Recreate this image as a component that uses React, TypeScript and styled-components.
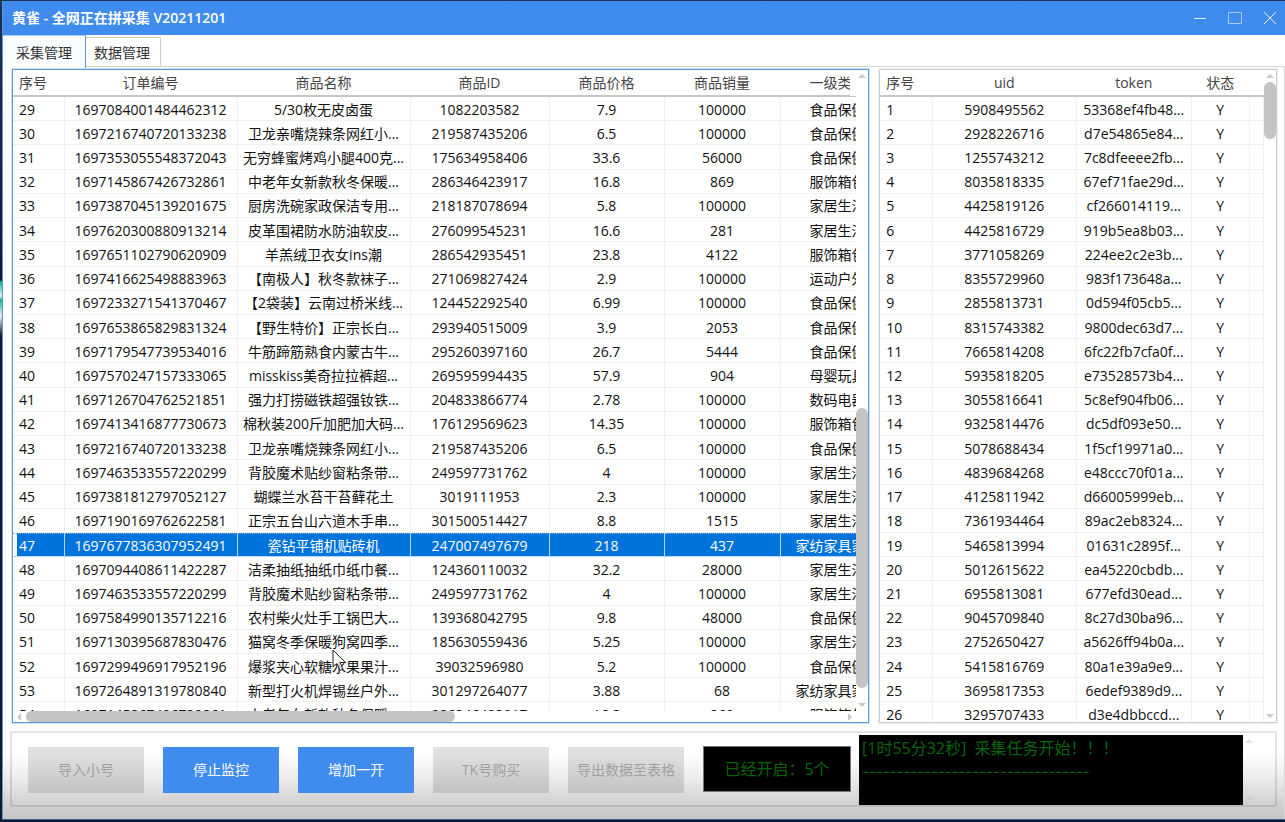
import React from 'react';
import styled, { createGlobalStyle, css } from 'styled-components';

const BLUE = '#408cee';

const GlobalStyle = createGlobalStyle`
  *, *::before, *::after { box-sizing: border-box; }
  body { margin: 0; background: #101a2c; }
  body, button {
    font-family: 'Open Sans', 'Noto Sans CJK SC', sans-serif;
    font-size: 14px;
    line-height: 20px;
  }
  button { padding: 0; border: 0; border-radius: 0; }
`;

const Desktop = styled.div`
  height: 100vh;
  padding: 1px 0 2px 2px;
  background: linear-gradient(#1d3358 0, #101a2c 280px, #19b38c 282px, #dff3f4 296px, #19b38c 300px, #e8eef5 316px, #101a2c 336px);
`;

const Window = styled.div`
  display: flex;
  flex-direction: column;
  height: 100%;
  overflow: hidden;
  border-left: 1px solid #5b94da;
  border-bottom: 1px solid #3c6296;
  background: linear-gradient(to top, #c6c6c6 0, #d2d2d2 16px, #eeeeee 44px, #ffffff 66px);
`;

const TitleBar = styled.header`
  display: flex;
  flex: none;
  align-items: center;
  justify-content: space-between;
  height: 34px;
  padding-left: 9px;
  background: ${BLUE};
  color: #fff;
`;

const Title = styled.h1`
  margin: 0;
  font-size: 14px;
  font-weight: 600;
`;

const WindowControls = styled.div`
  display: flex;
  gap: 5px;
`;

const ControlButton = styled.button<{ $faint?: boolean }>`
  display: grid;
  place-items: center;
  width: 30px;
  height: 34px;
  background: transparent;
  color: #fff;
  opacity: ${({ $faint }) => ($faint ? 0.55 : 0.9)};
`;

const TabStrip = styled.div`
  display: flex;
  flex: none;
  align-items: flex-end;
  height: 32px;
  border-bottom: 1px solid #d4d4d4;
`;

const Tab = styled.button<{ $active?: boolean }>`
  height: 29px;
  padding: 2px 10px 0 8px;
  border: 1px solid #cfcfcf;
  border-left: 0;
  border-bottom: 0;
  background: #fff;
  color: #333;
  ${({ $active }) =>
    $active &&
    css`
      height: 33px;
      margin-bottom: -2px;
      padding: 2px 13px 0;
      border: 0;
      border-top: 1px solid #a9cdf5;
      border-right: 1px solid #5b9ae4;
      background: #fafdff;
    `}
`;

const Page = styled.main`
  display: flex;
  flex: 1;
  flex-direction: column;
  gap: 8px;
  min-height: 0;
  padding: 2px 7px 12px 7px;
  border-right: 1px solid #d9d9d9;
`;

const Lists = styled.div`
  display: flex;
  flex: 1;
  gap: 10px;
  min-height: 0;
  margin-left: 2px;
`;

const ListBox = styled.section<{ $grow: number; $focused?: boolean }>`
  position: relative;
  display: grid;
  grid-template-columns: minmax(0, 1fr) 12px;
  grid-template-rows: minmax(0, 1fr) auto;
  flex: ${({ $grow }) => $grow} 1 0;
  min-width: 0;
  border: 1px solid ${({ $focused }) => ($focused ? '#5b9ad8' : '#cccccc')};
  box-shadow: 0 0 0 1px ${({ $focused }) => ($focused ? '#cfe4fb' : '#f0f0f0')};
  background: #fff;
`;

const Viewport = styled.div`
  position: relative;
  overflow: hidden;
`;

const DataTable = styled.table<{ $width: string }>`
  width: ${({ $width }) => $width};
  height: 657px;
  table-layout: fixed;
  border-collapse: separate;
  border-spacing: 0;
  color: #111;
`;

const HeadCell = styled.th`
  height: 27px;
  padding: 0 2px 0 0;
  border-bottom: 2px solid #c6c6c6;
  color: #444;
  font-weight: 400;
  text-align: center;
  white-space: nowrap;

  &:first-child {
    padding-left: 6px;
    text-align: left;
  }
`;

const Cell = styled.td`
  padding: 2px 1px 0 0;
  border-right: 1px solid #f0f0f0;
  border-bottom: 1px solid #f0f0f0;
  text-align: center;
  white-space: nowrap;

  &:first-child {
    padding-left: 6px;
    text-align: left;
  }
`;

const Row = styled.tr<{ $selected?: boolean }>`
  ${({ $selected }) =>
    $selected &&
    css`
      color: #fff;
      ${Cell} {
        padding-top: 1px;
        border-top: 1px dotted #8fb4d8;
        border-right-color: #b5d6f5;
        border-bottom-color: #b5d6f5;
        background: #0074dc;
      }
      ${Cell}:first-child {
        background: linear-gradient(to right, #fff 4px, #0074dc 4px);
      }
    `}
`;

const HeaderEnd = styled.div`
  position: absolute;
  top: 0;
  right: 0;
  width: 6px;
  height: 26px;
  background: #fff;
`;

const Bar = styled.div<{ $horizontal?: boolean }>`
  display: flex;
  flex-direction: ${({ $horizontal }) => ($horizontal ? 'row' : 'column')};
  ${({ $horizontal }) => ($horizontal ? 'height: 11px;' : 'width: 12px;')}
`;

const Space = styled.div<{ $size: number }>`
  flex: ${({ $size }) => $size} 1 0;
`;

const Thumb = styled(Space)`
  border-radius: 6px;
  background: #c4c4c4;
`;

const ArrowSlot = styled.div`
  display: grid;
  flex: 0 0 12px;
  place-items: center;
  color: #c8c8c8;
`;

const arrowPaths = {
  up: 'M0 6 4 2 8 6Z',
  down: 'M0 2 8 2 4 6Z',
  left: 'M6 0 6 8 2 4Z',
  right: 'M2 0 6 4 2 8Z',
};

function Arrow({ to }: { to: keyof typeof arrowPaths }) {
  return (
    <ArrowSlot>
      <svg width="8" height="8" viewBox="0 0 8 8" fill="currentColor" aria-hidden="true">
        <path d={arrowPaths[to]} />
      </svg>
    </ArrowSlot>
  );
}

function ScrollBar({ before, thumb, after, horizontal }: { before: number; thumb: number; after: number; horizontal?: boolean }) {
  return (
    <Bar $horizontal={horizontal} aria-hidden="true">
      <Arrow to={horizontal ? 'left' : 'up'} />
      <Space $size={before} />
      {thumb > 0 && <Thumb $size={thumb} />}
      <Space $size={after} />
      <Arrow to={horizontal ? 'right' : 'down'} />
    </Bar>
  );
}

const Pointer = styled.svg`
  position: absolute;
  left: 319px;
  top: 579px;
`;

const Panel = styled.footer`
  display: flex;
  flex: none;
  align-items: center;
  gap: 19px;
  height: 76px;
  padding: 2px 20px 0 16px;
  border: 2px solid rgba(0, 0, 0, 0.11);
  border-radius: 2px;
`;

const ActionButton = styled.button`
  flex: none;
  width: 116px;
  height: 46px;
  background: ${BLUE};
  color: #fff;

  &:disabled {
    background: rgba(0, 0, 0, 0.12);
    color: #a0a0a0;
  }
`;

const Console = styled.div`
  display: flex;
  flex: 1;
  align-items: center;
  align-self: stretch;
  gap: 8px;
  min-width: 0;
`;

const Counter = styled.output`
  display: grid;
  flex: none;
  place-items: center;
  width: 148px;
  height: 46px;
  margin-bottom: 2px;
  border: 1px solid #777;
  background: #000;
  color: #046404;
  font-size: 16px;
`;

const Log = styled.div`
  flex: 1;
  align-self: stretch;
  min-width: 0;
  overflow: hidden;
  padding: 1px 3px;
  background: #000;
  color: #0a640d;
  font-size: 16px;
  line-height: 24px;
  white-space: pre;
`;

const Rule = styled.div`
  font-family: Inter, sans-serif;
  font-size: 15px;
`;

const LogScroll = styled.div`
  display: flex;
  align-self: stretch;
  margin-left: -8px;
  opacity: 0.5;
`;

const orderColumns: [string, number][] = [
  ['序号', 52],
  ['订单编号', 173],
  ['商品名称', 173],
  ['商品ID', 139],
  ['商品价格', 115],
  ['商品销量', 116],
  ['一级类目', 115],
];

const orders: string[][] = [
  ['29', '1697084001484462312', '5/30枚无皮卤蛋', '1082203582', '7.9', '100000', '食品保健'],
  ['30', '1697216740720133238', '卫龙亲嘴烧辣条网红小...', '219587435206', '6.5', '100000', '食品保健'],
  ['31', '1697353055548372043', '无穷蜂蜜烤鸡小腿400克...', '175634958406', '33.6', '56000', '食品保健'],
  ['32', '1697145867426732861', '中老年女新款秋冬保暖...', '286346423917', '16.8', '869', '服饰箱包'],
  ['33', '1697387045139201675', '厨房洗碗家政保洁专用...', '218187078694', '5.8', '100000', '家居生活'],
  ['34', '1697620300880913214', '皮革围裙防水防油软皮...', '276099545231', '16.6', '281', '家居生活'],
  ['35', '1697651102790620909', '羊羔绒卫衣女ins潮', '286542935451', '23.8', '4122', '服饰箱包'],
  ['36', '1697416625498883963', '【南极人】秋冬款袜子...', '271069827424', '2.9', '100000', '运动户外'],
  ['37', '1697233271541370467', '【2袋装】云南过桥米线...', '124452292540', '6.99', '100000', '食品保健'],
  ['38', '1697653865829831324', '【野生特价】正宗长白...', '293940515009', '3.9', '2053', '食品保健'],
  ['39', '1697179547739534016', '牛筋蹄筋熟食内蒙古牛...', '295260397160', '26.7', '5444', '食品保健'],
  ['40', '1697570247157333065', 'misskiss美奇拉拉裤超...', '269595994435', '57.9', '904', '母婴玩具'],
  ['41', '1697126704762521851', '强力打捞磁铁超强钕铁...', '204833866774', '2.78', '100000', '数码电器'],
  ['42', '1697413416877730673', '棉秋装200斤加肥加大码...', '176129569623', '14.35', '100000', '服饰箱包'],
  ['43', '1697216740720133238', '卫龙亲嘴烧辣条网红小...', '219587435206', '6.5', '100000', '食品保健'],
  ['44', '1697463533557220299', '背胶魔术贴纱窗粘条带...', '249597731762', '4', '100000', '家居生活'],
  ['45', '1697381812797052127', '蝴蝶兰水苔干苔藓花土', '3019111953', '2.3', '100000', '家居生活'],
  ['46', '1697190169762622581', '正宗五台山六道木手串...', '301500514427', '8.8', '1515', '家居生活'],
  ['47', '1697677836307952491', '瓷钻平铺机贴砖机', '247007497679', '218', '437', '家纺家具家装'],
  ['48', '1697094408611422287', '洁柔抽纸抽纸巾纸巾餐...', '124360110032', '32.2', '28000', '家居生活'],
  ['49', '1697463533557220299', '背胶魔术贴纱窗粘条带...', '249597731762', '4', '100000', '家居生活'],
  ['50', '1697584990135712216', '农村柴火灶手工锅巴大...', '139368042795', '9.8', '48000', '食品保健'],
  ['51', '1697130395687830476', '猫窝冬季保暖狗窝四季...', '185630559436', '5.25', '100000', '家居生活'],
  ['52', '1697299496917952196', '爆浆夹心软糖水果果汁...', '39032596980', '5.2', '100000', '食品保健'],
  ['53', '1697264891319780840', '新型打火机焊锡丝户外...', '301297264077', '3.88', '68', '家纺家具家装'],
  ['54', '1697145867426732861', '中老年女新款秋冬保暖...', '286346423917', '16.8', '869', '服饰箱包'],
];

const accountColumns: [string, number | undefined][] = [
  ['序号', 53],
  ['uid', 144],
  ['token', 115],
  ['状态', 58],
  ['', undefined],
];

const accounts: [string, string][] = [
  ['5908495562', '53368ef4fb48...'],
  ['2928226716', 'd7e54865e84...'],
  ['1255743212', '7c8dfeeee2fb...'],
  ['8035818335', '67ef71fae29d...'],
  ['4425819126', 'cf266014119...'],
  ['4425816729', '919b5ea8b03...'],
  ['3771058269', '224ee2c2e3b...'],
  ['8355729960', '983f173648a...'],
  ['2855813731', '0d594f05cb5...'],
  ['8315743382', '9800dec63d7...'],
  ['7665814208', '6fc22fb7cfa0f...'],
  ['5935818205', 'e73528573b4...'],
  ['3055816641', '5c8ef904fb06...'],
  ['9325814476', 'dc5df093e50...'],
  ['5078688434', '1f5cf19971a0...'],
  ['4839684268', 'e48ccc70f01a...'],
  ['4125811942', 'd66005999eb...'],
  ['7361934464', '89ac2eb8324...'],
  ['5465813994', '01631c2895f...'],
  ['5012615622', 'ea45220cbdb...'],
  ['6955813081', '677efd30ead...'],
  ['9045709840', '8c27d30ba96...'],
  ['2752650427', 'a5626ff94b0a...'],
  ['5415816769', '80a1e39a9e9...'],
  ['3695817353', '6edef9389d9...'],
  ['3295707433', 'd3e4dbbccd...'],
];

function Table({
  columns,
  rows,
  width,
  selected,
}: {
  columns: [string, number | undefined][];
  rows: string[][];
  width: string;
  selected?: string;
}) {
  return (
    <DataTable $width={width}>
      <colgroup>
        {columns.map(([name, size]) => (
          <col key={name} width={size} />
        ))}
      </colgroup>
      <thead>
        <tr>
          {columns.map(([name]) => (
            <HeadCell key={name} scope="col">
              {name}
            </HeadCell>
          ))}
        </tr>
      </thead>
      <tbody>
        {rows.map((row) => (
          <Row key={row[0]} $selected={row[0] === selected} aria-selected={row[0] === selected}>
            {row.map((value, i) => (
              <Cell key={i}>{value}</Cell>
            ))}
          </Row>
        ))}
      </tbody>
    </DataTable>
  );
}

export default function App() {
  return (
    <Desktop>
      <GlobalStyle />
      <Window>
        <TitleBar>
          <Title>黄雀 - 全网正在拼采集 V20211201</Title>
          <WindowControls>
            <ControlButton aria-label="最小化">
              <svg width="14" height="14" viewBox="0 0 14 14" stroke="currentColor" fill="none">
                <path d="M1 7.5H13" />
              </svg>
            </ControlButton>
            <ControlButton aria-label="最大化" $faint>
              <svg width="14" height="14" viewBox="0 0 14 14" stroke="currentColor" fill="none">
                <path d="M.5 1.5H13.5V12.5H.5Z" />
              </svg>
            </ControlButton>
            <ControlButton aria-label="关闭">
              <svg width="14" height="14" viewBox="0 0 14 14" stroke="currentColor" fill="none">
                <path d="M1 1 13 13M13 1 1 13" />
              </svg>
            </ControlButton>
          </WindowControls>
        </TitleBar>
        <TabStrip role="tablist">
          <Tab role="tab" aria-selected="true" $active>
            采集管理
          </Tab>
          <Tab role="tab" aria-selected="false">
            数据管理
          </Tab>
        </TabStrip>
        <Page>
          <Lists>
            <ListBox $grow={858} $focused>
              <Viewport>
                <Table columns={orderColumns} rows={orders} width="883px" selected="47" />
                <HeaderEnd />
              </Viewport>
              <ScrollBar before={326} thumb={280} after={11} />
              <ScrollBar horizontal before={1} thumb={430} after={390} />
              <Pointer width="15" height="23" viewBox="0 0 15 23" aria-hidden="true">
                <path d="M1 1V18L5 14.500L8 21.500L11 20L8 13.500H13.500Z" fill="#fff" fillOpacity="0.8" stroke="#222" />
              </Pointer>
            </ListBox>
            <ListBox $grow={397}>
              <Viewport>
                <Table
                  columns={accountColumns}
                  rows={accounts.map(([uid, token], i) => [String(i + 1), uid, token, 'Y', ''])}
                  width="100%"
                />
              </Viewport>
              <ScrollBar before={0} thumb={57} after={571} />
            </ListBox>
          </Lists>
          <Panel>
            <ActionButton disabled>导入小号</ActionButton>
            <ActionButton>停止监控</ActionButton>
            <ActionButton>增加一开</ActionButton>
            <ActionButton disabled>TK号购买</ActionButton>
            <ActionButton disabled>导出数据至表格</ActionButton>
            <Console>
              <Counter>已经开启：5个</Counter>
              <Log role="log">
                <div>[1时55分32秒]  采集任务开始！！！</div>
                <Rule>---------------------------------</Rule>
              </Log>
              <LogScroll>
                <ScrollBar before={1} thumb={0} after={1} />
              </LogScroll>
            </Console>
          </Panel>
        </Page>
      </Window>
    </Desktop>
  );
}
